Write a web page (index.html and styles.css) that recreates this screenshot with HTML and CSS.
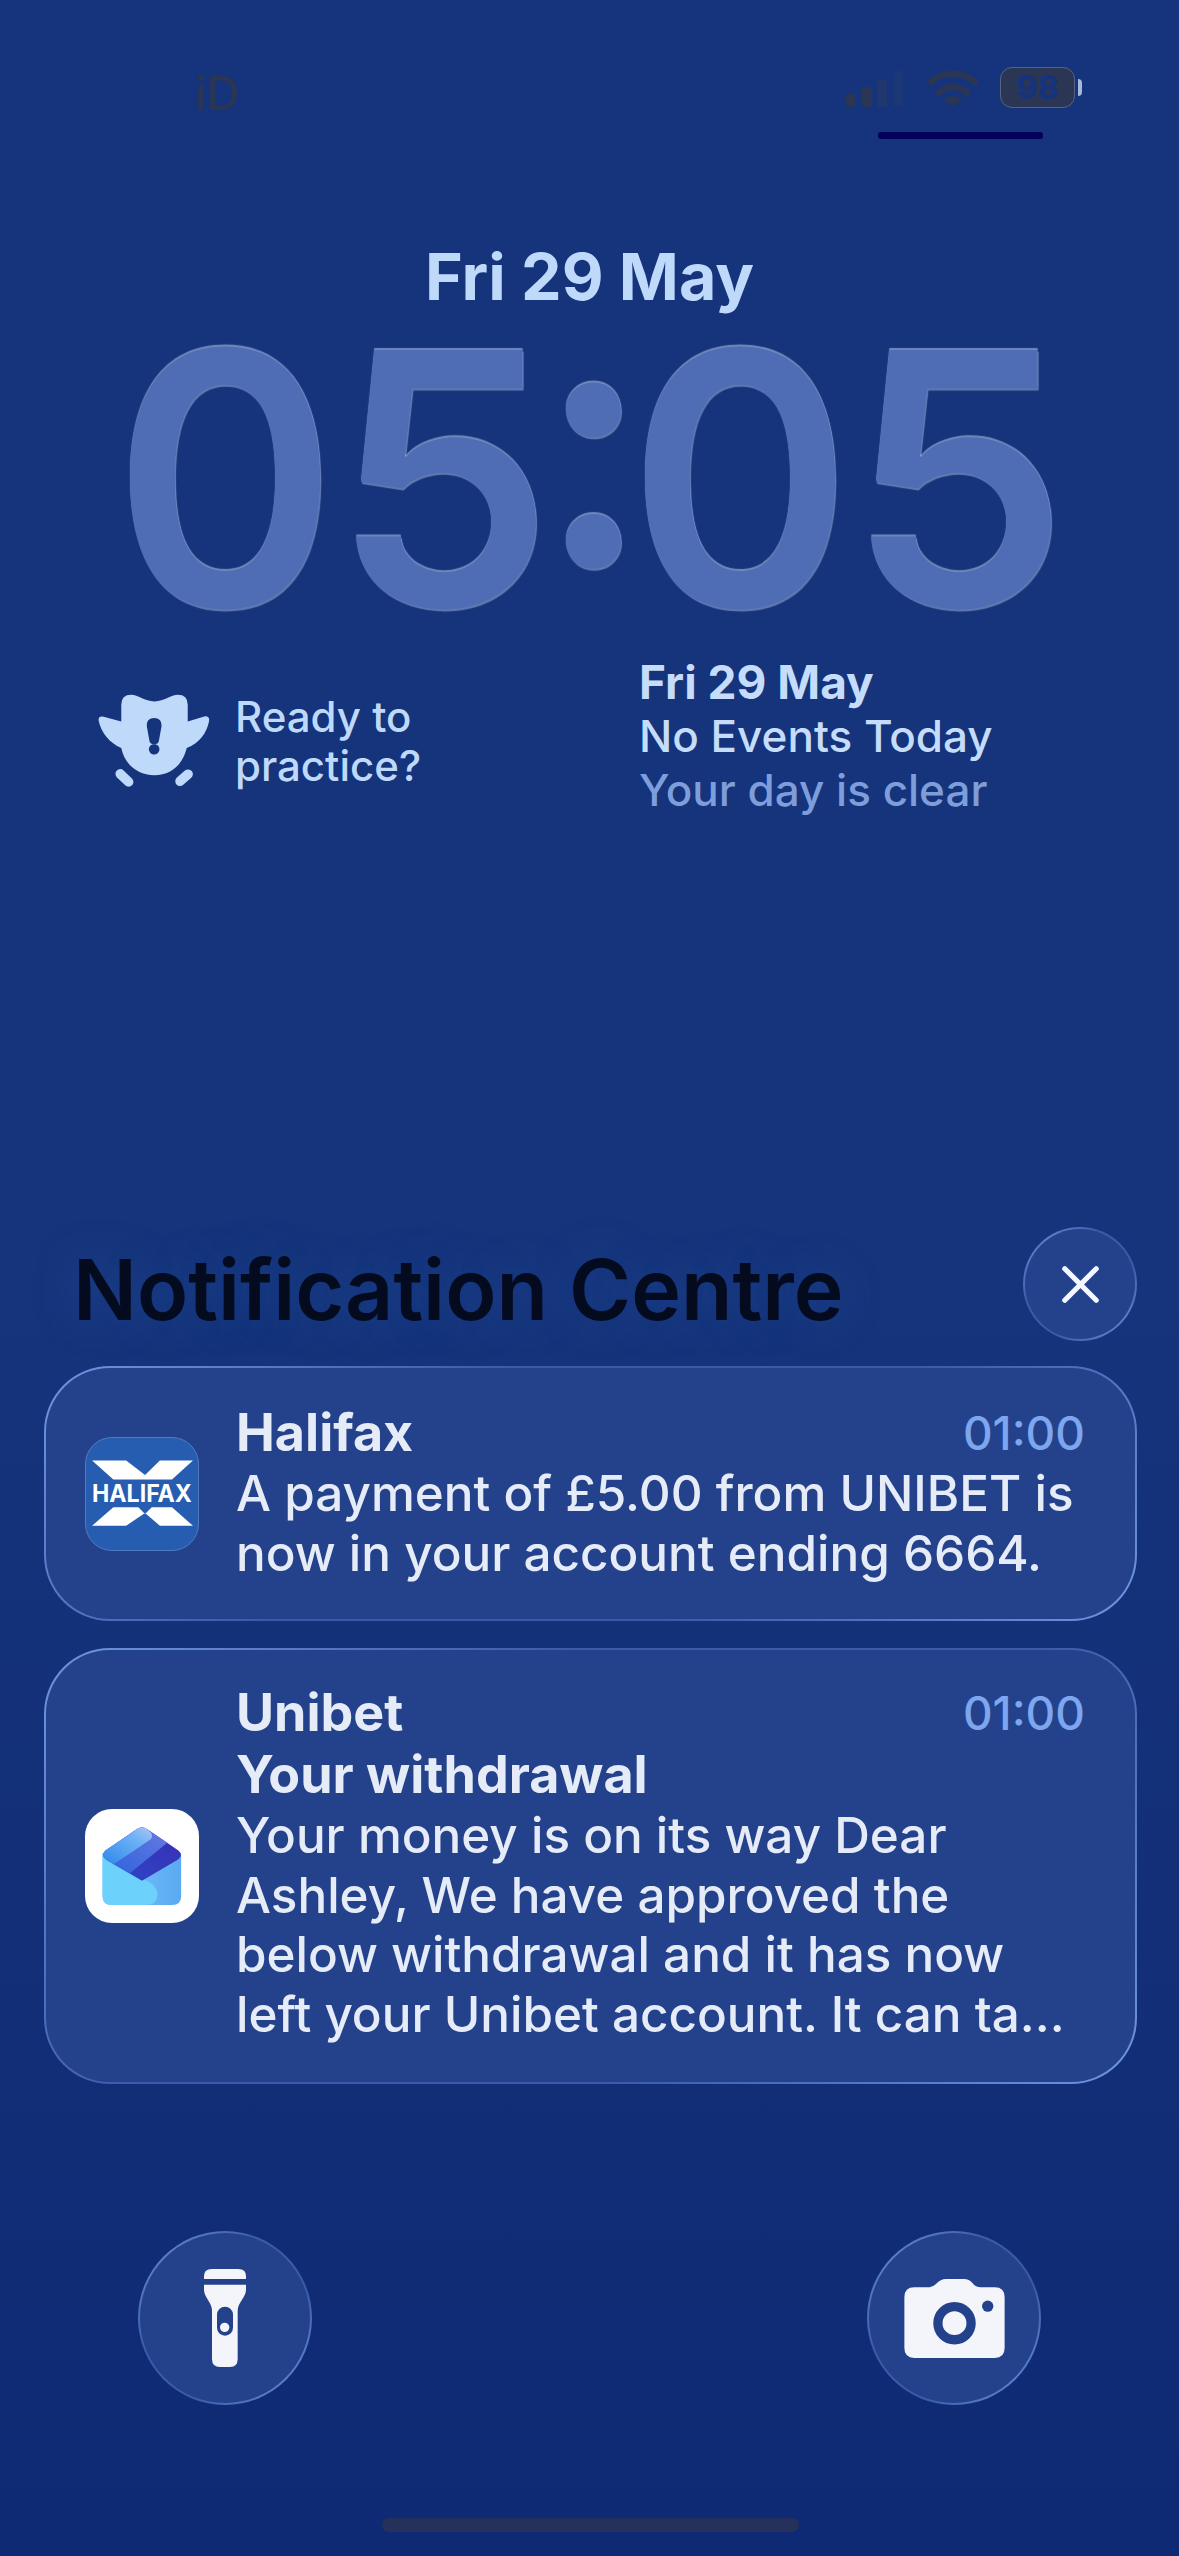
FILE: index.html
```html
<!DOCTYPE html>
<html lang="en">
<head>
<meta charset="utf-8">
<title>Lock screen</title>
<link rel="stylesheet" href="styles.css">
</head>
<body>
<main class="screen">
  <header class="status">
    <span class="carrier">iD</span>
    <div class="status-right">
      <div class="status-icons">
        <svg class="signal" viewBox="0 0 58 36" aria-hidden="true">
          <rect x="0" y="23" width="9" height="13" rx="2" fill="#2b3554"/>
          <rect x="16" y="16" width="10" height="20" rx="2" fill="#2b3554"/>
          <rect x="32" y="9" width="9" height="27" rx="1" fill="#20386f"/>
          <rect x="48" y="0" width="9" height="36" rx="1" fill="#1c3775"/>
        </svg>
        <svg class="wifi" viewBox="0 0 50 38" aria-hidden="true">
          <path d="M3 12C15 1 35 1 47 12" fill="none" stroke="#2b3554" stroke-width="6.5" stroke-linecap="round"/>
          <path d="M11 23C19 15 31 15 39 23" fill="none" stroke="#2b3554" stroke-width="6.5" stroke-linecap="round"/>
          <path d="M25 37L16 30C21 25 29 25 34 30Z" fill="#2b3554"/>
        </svg>
        <div class="battery"><span class="battery-level">98</span><i class="battery-nub"></i></div>
      </div>
      <div class="status-line"></div>
    </div>
  </header>

  <section class="clock-block">
    <div class="date">Fri 29 May</div>
    <div class="clock">05<span class="colon">:</span>05</div>
  </section>

  <section class="widgets">
    <div class="widget-practice">
      <svg class="owl" viewBox="55 103 337 279" aria-hidden="true">
        <path fill="#bfd9fb" fill-rule="evenodd" d="M125 135Q125 105 155 105C175 105 195 125 225 125C255 125 275 105 295 105Q325 105 325 135L325 185L375 170Q392 168 389 185C382 220 360 250 322 265C310 315 275 347 225 347C175 347 135 315 125 265C90 250 65 220 57 183Q55 168 72 171L125 185ZM224 175C240 175 247 185 246 200L238 245Q236 254 224 254Q212 254 210 245L202 200C201 185 208 175 224 175ZM224 253A16 16 0 1 0 224 285A16 16 0 1 0 224 253Z"/>
        <path d="M122 343L147 367M326 344L302 365" stroke="#bfd9fb" stroke-width="29" stroke-linecap="round"/>
      </svg>
      <p class="practice-text">Ready to<br>practice?</p>
    </div>
    <div class="widget-calendar">
      <div class="cal-date">Fri 29 May</div>
      <div class="cal-main">No Events Today</div>
      <div class="cal-sub">Your day is clear</div>
    </div>
  </section>

  <section class="notif-head">
    <h1 class="notif-title">Notification Centre</h1>
    <button class="close glass" type="button" aria-label="Close">
      <svg viewBox="0 0 40 40" class="close-x" aria-hidden="true"><path d="M3 3L37 37M37 3L3 37" stroke="#f5f7fc" stroke-width="5.6" stroke-linecap="round"/></svg>
    </button>
  </section>

  <article class="card glass">
    <div class="app-icon halifax">
      <svg viewBox="0 0 338 338" class="halifax-logo" aria-hidden="true">
        <path fill="#fff" d="M21 70H122L178 113L222 70H320L258 126H84ZM84 208H158L178 228L198 208H258L320 263H222L178 225L122 263H21Z"/>
        <text x="169" y="193" text-anchor="middle" class="halifax-word" textLength="296" lengthAdjust="spacingAndGlyphs">HALIFAX</text>
      </svg>
    </div>
    <div class="card-body">
      <div class="card-top"><strong class="card-app">Halifax</strong><time class="card-time">01:00</time></div>
      <p class="card-text">A payment of £5.00 from UNIBET is<br>now in your account ending 6664.</p>
    </div>
  </article>

  <article class="card card-second glass">
    <div class="app-icon unibet">
      <svg viewBox="0 0 338 338" class="unibet-logo" aria-hidden="true">
        <defs>
          <linearGradient id="back" x1="0" y1="0" x2="1" y2="0"><stop offset="0" stop-color="#7cc6fa"/><stop offset="1" stop-color="#5aa9f2"/></linearGradient>
          <linearGradient id="band1" x1="0" y1="1" x2="1" y2="0"><stop offset="0" stop-color="#2f87ea"/><stop offset=".7" stop-color="#6fb4f6"/><stop offset="1" stop-color="#b4c0f6"/></linearGradient>
          <linearGradient id="band2" x1="0" y1="1" x2="1" y2="0"><stop offset="0" stop-color="#2b63da"/><stop offset="1" stop-color="#6a78e4"/></linearGradient>
          <linearGradient id="band3" x1="0" y1="1" x2="1" y2="0"><stop offset="0" stop-color="#2b46c8"/><stop offset="1" stop-color="#3a2fb4"/></linearGradient>
          <filter id="soft"><feGaussianBlur stdDeviation="1.2"/></filter>
        </defs>
        <g filter="url(#soft)">
          <path fill="url(#back)" d="M52 130H285V258Q285 285 258 285H79Q52 285 52 258Z"/>
          <path fill="#6cd2fb" d="M52 135L192 218Q216 233 215 255Q212 285 180 285H79Q52 285 52 258Z"/>
          <path fill="url(#band3)" d="M169 213L62 150Q45 135 62 122L150 62Q169 48 188 62L276 122Q293 135 276 150Z"/>
          <path fill="url(#band2)" d="M132 191L62 150Q45 135 62 122L150 62Q169 48 188 62L244 100Z"/>
          <path fill="url(#band1)" d="M85 164L62 150Q45 135 62 122L150 62Q169 48 188 62Q205 75 195 90Z"/>
        </g>
      </svg>
    </div>
    <div class="card-body card-body-long">
      <div class="card-top"><strong class="card-app">Unibet</strong><time class="card-time">01:00</time></div>
      <strong class="card-subject">Your withdrawal</strong>
      <p class="card-text">Your money is on its way Dear<br>Ashley, We have approved the<br>below withdrawal and it has now<br>left your Unibet account. It can ta...</p>
    </div>
  </article>

  <footer class="actions">
    <button class="round glass" type="button" aria-label="Torch">
      <svg class="torch" viewBox="252 150 126 294" aria-hidden="true">
        <path fill="#f3f5fa" d="M252 180V172Q252 150 275 150H355Q378 150 378 172V180Z"/>
        <path fill="#f3f5fa" d="M252 197H378V212C378 235 353 250 353 275V420Q353 444 330 444H300Q276 444 276 420V275C276 250 252 235 252 212Z"/>
        <rect x="291" y="263" width="48" height="87" rx="24" fill="#24428c"/>
        <circle cx="314" cy="325" r="14" fill="#f3f5fa"/>
      </svg>
    </button>
    <button class="round glass" type="button" aria-label="Camera">
      <svg class="camera" viewBox="160 180 302 238" aria-hidden="true">
        <path fill="#f3f5fa" d="M190 205H235Q245 205 255 195Q270 180 285 180H340Q355 180 365 192Q375 205 390 205H432Q462 205 462 235V388Q462 418 432 418H190Q160 418 160 388V235Q160 205 190 205Z"/>
        <circle cx="311" cy="313" r="50" fill="none" stroke="#24428c" stroke-width="28"/>
        <circle cx="411" cy="262" r="17" fill="#24428c"/>
      </svg>
    </button>
  </footer>

  <div class="home-bar"></div>
</main>
</body>
</html>
```

FILE: styles.css
```css
* { box-sizing: border-box; }
html, body { margin: 0; padding: 0; }
body { width: 1179px; height: 2556px; overflow: hidden; font-family: "Inter", "Noto Sans", sans-serif; }

.screen {
  width: 1179px;
  height: 2556px;
  display: flex;
  flex-direction: column;
  background: linear-gradient(180deg, #15347d 0%, #15347b 50%, #0f2a74 100%);
}

.status {
  height: 140px;
  flex: none;
  display: flex;
  justify-content: space-between;
  align-items: flex-start;
  padding: 67px 104px 0 195px;
}
.carrier {
  font-size: 46px;
  line-height: 44px;
  margin-top: 4px;
  font-weight: 500;
  color: #2b3554;
  filter: blur(.3px);
}
.status-right { display: flex; flex-direction: column; align-items: flex-start; }
.status-icons { display: flex; align-items: center; gap: 24px; }
.signal { width: 58px; height: 36px; display: block; margin-top: 3px; }
.wifi { width: 50px; height: 38px; display: block; margin: 3px -2px 0 0; }
.battery {
  position: relative;
  width: 75px;
  height: 41px;
  border-radius: 12px;
  border: 1px solid #566387;
  background: #2b3554;
  display: flex;
  align-items: center;
  justify-content: center;
}
.battery-level { font-size: 32px; font-weight: 800; color: #15347d; line-height: 1; }
.battery-nub {
  position: absolute;
  left: 77px;
  top: 11px;
  width: 4px;
  height: 17px;
  border-radius: 0 6px 6px 0;
  background: #a8b8dc;
}
.status-line {
  width: 165px;
  height: 7px;
  margin: 24px 0 0 32px;
  border-radius: 3px;
  background: #04005a;
}

.clock-block { flex: none; display: flex; flex-direction: column; align-items: center; padding-top: 104px; }
.date { font-size: 64.5px; line-height: 66px; font-weight: 700; color: #bfd9fb; }
.clock {
  height: 304px;
  margin-top: 16px;
  font-size: 352px;
  line-height: 304px;
  font-weight: 600;
  letter-spacing: -7px;
  font-feature-settings: "case", "tnum";
  color: #4e6db5;
  text-shadow: 0 -2px 1px rgba(190, 208, 240, .55), 1px 2px 1px rgba(190, 208, 240, .45);
}
.colon { display: inline-block; margin: 0 -7px; transform: translateY(-8px); }

.widgets {
  flex: none;
  display: flex;
  padding: 25px 0 0 98px;
  height: 178px;
}
.widget-practice { width: 541px; display: flex; align-items: flex-start; gap: 25px; padding-top: 39px; }
.owl { width: 112px; height: 93px; display: block; flex: none; }
.practice-text { margin: -2px 0 0; font-size: 42px; line-height: 49px; font-weight: 500; color: #bfd9fb; }
.widget-calendar { font-size: 44px; line-height: 54px; font-weight: 500; color: #c6dcfb; }
.cal-date { font-size: 46px; font-weight: 700; }
.cal-sub { color: #7e9ddb; }

.notif-head {
  flex: none;
  display: flex;
  justify-content: space-between;
  align-items: center;
  margin-top: 419px;
  padding: 0 42px 0 73px;
  height: 114px;
}
.notif-title {
  margin: 10px 0 0;
  font-size: 84.2px;
  line-height: 100px;
  font-weight: 600;
  color: #050b1e;
  text-shadow: 0 0 40px rgba(40, 85, 160, .45);
}
.glass {
  border: 2px solid transparent;
  background:
    linear-gradient(#24428c, #24428c) padding-box,
    linear-gradient(135deg, #6f95e0 0%, #3b5ba8 35%, #3b5ba8 65%, #6f95e0 100%) border-box;
}
.close {
  width: 114px;
  height: 114px;
  border-radius: 50%;
  padding: 0;
  display: flex;
  align-items: center;
  justify-content: center;
}
.close-x { width: 37px; height: 37px; display: block; }

.card {
  flex: none;
  width: 1093px;
  height: 255px;
  margin: 25px 0 0 44px;
  border-radius: 66px;
  display: flex;
  align-items: center;
  gap: 37px;
  padding: 0 50px 0 39px;
  color: #e6ecf7;
}
.card-second { height: 436px; margin-top: 27px; }
.app-icon {
  width: 114px;
  height: 114px;
  flex: none;
  border-radius: 27px;
  display: flex;
  align-items: center;
  justify-content: center;
  overflow: hidden;
}
.halifax { background: #265db1; border: 1px solid #4f7cc0; }
.unibet { background: #fff; }
.halifax-logo, .unibet-logo { width: 114px; height: 114px; display: block; flex: none; }
.halifax-word { font-family: "Inter", sans-serif; font-size: 70px; font-weight: 700; fill: #fff; }
.card-body { flex: 1; min-width: 0; padding-bottom: 2px; }
.card-body-long { padding-bottom: 6px; }
.card-top { display: flex; justify-content: space-between; align-items: center; }
.card-app { font-size: 52px; line-height: 62px; font-weight: 700; }
.card-time { font-size: 46px; line-height: 62px; font-weight: 500; color: #7ea6ee; }
.card-subject { display: block; font-size: 52px; line-height: 62px; font-weight: 700; }
.card-text { margin: 0; font-size: 49.4px; line-height: 59.5px; font-weight: 500; white-space: nowrap; }

.actions {
  flex: none;
  display: flex;
  justify-content: space-between;
  margin-top: 147px;
  padding: 0 138px;
}
.round {
  width: 174px;
  height: 174px;
  border-radius: 50%;
  padding: 0;
  display: flex;
  align-items: center;
  justify-content: center;
}
.torch { width: 42px; height: 98px; display: block; }
.camera { width: 101px; height: 79px; display: block; }

.home-bar {
  flex: none;
  width: 417px;
  height: 14px;
  margin: 113px 0 0 382px;
  border-radius: 7px;
  background: #25315a;
}
```
